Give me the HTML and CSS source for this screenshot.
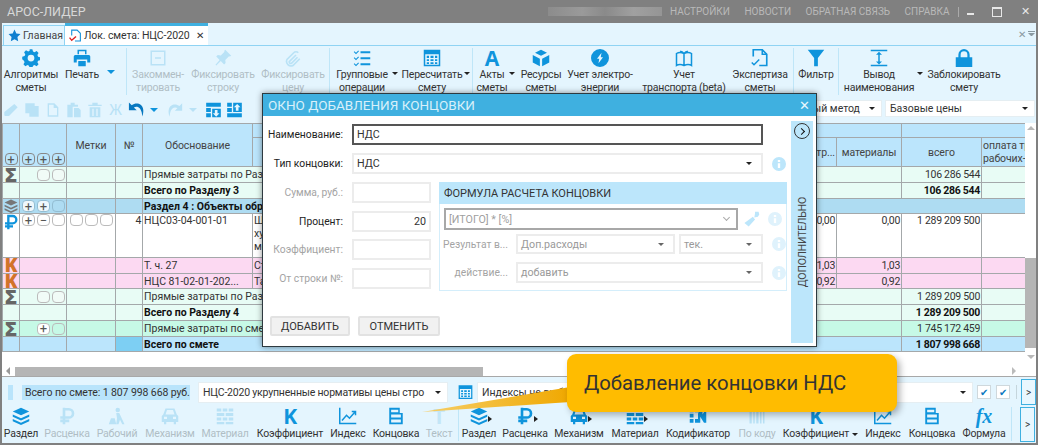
FILE: index.html
```html
<!DOCTYPE html>
<html lang="ru">

<head>
    <meta charset="UTF-8">
    <title>АРОС-ЛИДЕР</title>
    <link rel="stylesheet" href="styles.css">
</head>

<body>
    <svg class="defs" width="0" height="0">
        <symbol id="gear" viewBox="0 0 24 24"><path d="M10 1h4l1 3.4 2.2 1 3.2-1.7 2.8 2.8-1.7 3.2 1 2.3 3.5 1v4l-3.5 1-1 2.2 1.7 3.2-2.8 2.8-3.2-1.7-2.2 1-1 3.4h-4l-1-3.4-2.200-1-3.200 1.700-2.800-2.800 1.700-3.200-1-2.200L-1 16v-4l3.500-1 1-2.300-1.700-3.200L4.600 2.700l3.200 1.700 2.200-1zM12 9a5 5 0 1 0 0 10 5 5 0 0 0 0-10z" fill-rule="evenodd" transform="translate(1.200 1.200) scale(.9) translate(0 -2)"/></symbol>
        <symbol id="printer" viewBox="0 0 24 24"><path d="M6 1h12v6h-2V3H8v4H6zM3 8h18a2 2 0 0 1 2 2v8h-4v-4H5v4H1v-8a2 2 0 0 1 2-2zM7 16h10v7H7z"/></symbol>
        <symbol id="minusbox" viewBox="0 0 24 24"><path d="M2 2h20v20H2zM4 4v16h16V4zM8 11h8v2H8z" fill-rule="evenodd"/></symbol>
        <symbol id="pin" viewBox="0 0 24 24"><path d="M15 1l8 8-2 1-1-.5-5 5 .500 4-2 2-4.500-4.500L3 22l-1-1 5.500-6.500L3 10l2-2 4 .500 5-5-.500-1z"/></symbol>
        <symbol id="clip" viewBox="0 0 24 24"><path d="M19 5a4 4 0 0 0-6 0L4 14a6 6 0 0 0 8 8l9-9M16 8l-9 9a2 2 0 0 0 3 2l8-8" fill="none" stroke="currentColor" stroke-width="2.200"/></symbol>
        <symbol id="listcheck" viewBox="0 0 24 24"><path d="M10 3h13v2.500H10zM10 11h13v2.500H10zM10 19h13v2.500H10zM2 3l2 2 3-3 1 1-4 4-3-3zM2 11l2 2 3-3 1 1-4 4-3-3zM2 19l2 2 3-3 1 1-4 4-3-3z"/></symbol>
        <symbol id="calc" viewBox="0 0 24 24"><path d="M1 1h22v22H1zM3 7v14h18V7zM5 9h3v3H5zM10 9h4v3h-4zM16 9h3v3h-3zM5 13.500h3v2.500H5zM10 13.500h4v2.500h-4zM16 13.500h3v2.500h-3zM5 17.500h3V20H5zM10 17.500h4V20h-4zM16 17.500h3V20h-3z" fill-rule="evenodd"/></symbol>
        <symbol id="cubes" viewBox="0 0 24 24"><path d="M12 1l8 4-8 4-8-4zM1 8l9.500 5v10L1 18zM23 8l-9.500 5v10l9.500-5z"/></symbol>
        <symbol id="bolt" viewBox="0 0 24 24"><path d="M12 0a12 12 0 1 1 0 24 12 12 0 0 1 0-24zM14 5l-6 8h3l-1 6 6-8h-3z" fill-rule="evenodd"/></symbol>
        <symbol id="map" viewBox="0 0 24 24"><path d="M2 6c3-2 6-2 10 0 4-2 7-2 10 0v16c-3-2-6-2-10 0-4-2-7-2-10 0zM12 6v16M7 3c1.500 0 3.500 1 5 3 1.500-2 3.500-3 5-3" fill="none" stroke="currentColor" stroke-width="2"/></symbol>
        <symbol id="doccheck" viewBox="0 0 24 24"><path d="M3 10V1h12l6 6v15H11" fill="none" stroke="currentColor" stroke-width="2.200"/><path d="M15 1v6h6M1 18l3 3 7-7" fill="none" stroke="currentColor" stroke-width="2"/></symbol>
        <symbol id="funnel" viewBox="0 0 24 24"><path d="M1 1h22l-8.500 11v11h-5V12z"/></symbol>
        <symbol id="ibeam" viewBox="0 0 24 24"><path d="M1 1h22v2H1zM1 21h22v2H1zM11 6h2v12h-2zM12 3.500l4 4H8zM12 20.500l-4-4h8z"/></symbol>
        <symbol id="lock" viewBox="0 0 24 24"><path d="M12 0a7.500 7.500 0 0 1 7.500 7.500V11H23v13H1V11h3.500V7.500A7.500 7.500 0 0 1 12 0zm0 3a4.500 4.500 0 0 0-4.500 4.500V11h9V7.500A4.500 4.500 0 0 0 12 3z"/></symbol>
        <symbol id="pencil" viewBox="0 0 24 24"><path d="M17 3l5 5-13 13H3l-1-1v-5z"/></symbol>
        <symbol id="copy" viewBox="0 0 24 24"><path d="M2 2h14v4h6v16H8v-5H2z"/></symbol>
        <symbol id="doc" viewBox="0 0 24 24"><path d="M4 2h10l6 6v14H4zM6 4v16h12V9h-5V4z" fill-rule="evenodd"/></symbol>
        <symbol id="paste" viewBox="0 0 24 24"><path d="M2 4h5V1h6v3h5v3h-8v16H2zM12 9h7l3 3v11H12z"/></symbol>
        <symbol id="trash" viewBox="0 0 24 24"><path d="M2 4h6V1h8v3h6v2H2zM4 8h16v15H4zM8 10v11h2V10zM14 10v11h2V10z" fill-rule="evenodd"/></symbol>
        <symbol id="undo" viewBox="0 0 24 24"><path d="M2 2v11h11L9 9c4-2 9-1 11 7l1 6c3-9 1-16-5-18-4-1-7 0-10 2z"/></symbol>
        <symbol id="griddown" viewBox="0 0 24 24"><path d="M1 1h22v6H1zM1 9h7v6H1zM1 17h7v6H1zM10 10h13v13H10zM14 12v5h-3l5 5 5-5h-3v-5z" fill-rule="evenodd"/></symbol>
        <symbol id="gridup" viewBox="0 0 24 24"><path d="M1 1h7v6H1zM1 9h7v6H1zM1 17h22v6H1zM10 1h13v14H10zM16 3l-5 5h3v5h4V8h3z" fill-rule="evenodd"/></symbol>
        <symbol id="layers" viewBox="0 0 24 24"><path d="M12 1l11 5-11 5L1 6zM1 10l11 5 11-5v3l-11 5-11-5zM1 16l11 5 11-5v3l-11 5-11-5z"/></symbol>
        <symbol id="ruble" viewBox="0 0 24 24"><path d="M8 1v22M8 3h6.500a5.500 5.500 0 0 1 0 11H3M3 18.500h12" fill="none" stroke="currentColor" stroke-width="3.500"/></symbol>
        <symbol id="worker" viewBox="0 0 24 24"><path d="M13 1a3 3 0 1 1 0 6 3 3 0 0 1 0-6zM11 8h4l7 15h-3l-3-6-2 6h-3l1-8zM1 23l3-8h5l2 8z"/></symbol>
        <symbol id="car" viewBox="0 0 24 24"><path d="M6 2h12l3 8 2 2v8h-3v3h-3v-3H7v3H4v-3H1v-8l2-2zM8 4l-2 6h12l-2-6zM4 13v3h4v-3zM16 13v3h4v-3z" fill-rule="evenodd"/></symbol>
        <symbol id="bricks" viewBox="0 0 24 24"><path d="M1 2h6v4H1zM9 2h6v4H9zM17 2h6v4h-6zM1 8h10v4H1zM13 8h10v4H13zM1 14h6v4H1zM9 14h6v4H9zM17 14h6v4h-6zM1 20h10v3H1zM13 20h10v3H13z"/></symbol>
        <symbol id="chart" viewBox="0 0 24 24"><path d="M1 1v21h22" fill="none" stroke="currentColor" stroke-width="2"/><path d="M4 18l6-7 4 4 7-8M17 6h5v5" fill="none" stroke="currentColor" stroke-width="2"/></symbol>
        <symbol id="ending" viewBox="0 0 24 24"><path d="M3 1h14v7h4v15H3zM5.500 3.500V7H15V3.500zM5.500 10v4h13v-4zM5.500 16.500v4h13v-4z" fill-rule="evenodd"/></symbol>
        <symbol id="codes" viewBox="0 0 24 24"><path d="M1 2h5v5H1zM8 2h5v5H8zM1 9h5v5H1zM1 16h5v5H1zM8 16h5v5H8zM15 2h3v8l5-8h0v19h-3l-5-8v8h-3V9z"/></symbol>
        <symbol id="barcode" viewBox="0 0 24 24"><path d="M2 2h3v20H2zM7 2h2v20H7zM11 2h3v20h-3zM16 2h2v20h-2zM20 2h2v20h-2z"/></symbol>
        <symbol id="star" viewBox="0 0 24 24"><path d="M12 1l3.400 7.300 7.600 1-5.600 5.400 1.400 8L12 19l-6.800 3.700 1.400-8L1 9.300l7.600-1z"/></symbol>
        <symbol id="brush" viewBox="0 0 24 24"><path d="M17 1h5l1 4-2 3-5 1 1-6zM14 8l3 4-9 10-6-5z"/></symbol>
        <symbol id="info" viewBox="0 0 24 24"><path d="M12 0a12 12 0 1 1 0 24 12 12 0 0 1 0-24zM10 5v3.500h4V5zM10 10.500V19h4v-8.500z" fill-rule="evenodd"/></symbol>
    </svg>

    <div class="app">
        <header class="titlebar">
            <span class="app-name">АРОС-ЛИДЕР</span>
            <span class="user-blur"></span>
            <a class="top-link">НАСТРОЙКИ</a>
            <a class="top-link">НОВОСТИ</a>
            <a class="top-link">ОБРАТНАЯ СВЯЗЬ</a>
            <a class="top-link">СПРАВКА</a>
            <span class="top-sep"></span>
            <span class="win-btn win-min"></span>
            <span class="win-btn win-max"></span>
            <span class="win-btn win-close">✕</span>
        </header>

        <div class="tabbar">
            <div class="tab tab-home"><svg class="tab-ic"><use href="#star"/></svg>Главная</div>
            <div class="tab tab-active">
                <svg class="tab-ic tab-doc" viewBox="0 0 24 24"><path d="M5 12V2h10l6 6v14H11" fill="none" stroke="#1590d8" stroke-width="2"/><path d="M1 16l4 5 8-7" fill="none" stroke="#e02020" stroke-width="2.500"/></svg>
                Лок. смета: НЦС-2020<span class="tab-x">✕</span>
            </div>
            <div class="tab-tools">✕ <span class="tab-menu"></span></div>
        </div>

        <div class="ribbon">
            <div class="tool w58"><svg class="ic"><use href="#gear"/></svg><span>Алгоритмы<br>сметы</span></div>
            <div class="tool w44"><svg class="ic"><use href="#printer"/></svg><span>Печать</span></div>
            <span class="caret caret-blue w14"></span>
            <span class="sep sep-a"></span>
            <div class="tool w62 off"><svg class="ic"><use href="#minusbox"/></svg><span>Закоммен-<br>тировать</span></div>
            <div class="tool w68 off"><svg class="ic"><use href="#pin"/></svg><span>Фиксировать<br>строку</span></div>
            <div class="tool w72 off"><svg class="ic"><use href="#clip"/></svg><span>Фиксировать<br>цену</span></div>
            <span class="sep"></span>
            <div class="tool w64"><svg class="ic"><use href="#listcheck"/></svg><span>Групповые<br>операции</span></div>
            <span class="caret w5"></span>
            <div class="tool w68"><svg class="ic"><use href="#calc"/></svg><span>Пересчитать<br>смету</span></div>
            <span class="caret w6"></span>
            <span class="sep"></span>
            <div class="tool w38"><span class="glyph">A</span><span>Акты<br>сметы</span></div>
            <span class="caret w6"></span>
            <div class="tool w48"><svg class="ic"><use href="#cubes"/></svg><span>Ресурсы<br>сметы</span></div>
            <div class="tool w70"><svg class="ic"><use href="#bolt"/></svg><span>Учет электро-<br>энергии</span></div>
            <div class="tool w98"><svg class="ic"><use href="#map"/></svg><span>Учет<br>транспорта (beta)</span></div>
            <div class="tool w54"><svg class="ic"><use href="#doccheck"/></svg><span>Экспертиза<br>сметы</span></div>
            <span class="sep sep-b"></span>
            <div class="tool w44"><svg class="ic"><use href="#funnel"/></svg><span>Фильтр</span></div>
            <span class="sep"></span>
            <div class="tool w80"><svg class="ic"><use href="#ibeam"/></svg><span>Вывод<br>наименования</span></div>
            <span class="caret w5"></span>
            <div class="tool w82"><svg class="ic"><use href="#lock"/></svg><span>Заблокировать<br>смету</span></div>
        </div>

        <div class="editbar">
            <div class="edit-icons">
                <svg class="eic off"><use href="#pencil"/></svg>
                <svg class="eic off"><use href="#copy"/></svg>
                <svg class="eic off"><use href="#doc"/></svg>
                <svg class="eic off"><use href="#paste"/></svg>
                <svg class="eic off"><use href="#trash"/></svg>
                <span class="eic-text">Ж</span>
                <svg class="eic strong"><use href="#undo"/></svg>
                <span class="caret caret-blue"></span>
                <svg class="eic off flip"><use href="#undo"/></svg>
                <span class="caret caret-pale"></span>
                <svg class="eic grid-ic"><use href="#griddown"/></svg>
                <svg class="eic grid-ic"><use href="#gridup"/></svg>
            </div>
            <div class="combo combo-method"><span>Ресурсный метод</span><i class="caret"></i></div>
            <div class="combo combo-prices"><span>Базовые цены</span><i class="caret"></i></div>
        </div>

        <div class="grid-area">
            <div class="grid-main">
                <table class="grid">
                    <colgroup>
                        <col class="c1"><col class="c2"><col class="c3"><col class="c4"><col class="c5">
                        <col class="c6"><col class="c7"><col class="c8"><col class="c9"><col class="c10"><col class="c11">
                    </colgroup>
                    <tr class="head-top">
                        <th rowspan="2" class="head-btns"><div class="boxes center"><b class="box">+</b></div></th>
                        <th rowspan="2" class="head-btns"><div class="boxes"><b class="box">+</b><b class="box">+</b><b class="box">+</b></div></th>
                        <th rowspan="2">Метки</th>
                        <th rowspan="2">№</th>
                        <th rowspan="2">Обоснование</th>
                        <th colspan="4"></th>
                        <th colspan="2"></th>
                    </tr>
                    <tr class="head-sub">
                        <th>Наименование</th>
                        <th></th>
                        <th class="clip">мех. тр...</th>
                        <th>материалы</th>
                        <th>всего</th>
                        <th class="clip">оплата труда<br>рабочих-строителей</th>
                    </tr>
                    <tr class="r16 sum">
                        <td class="sym">Σ</td>
                        <td><div class="boxes"><b class="box"></b><b class="box"></b></div></td>
                        <td></td><td></td>
                        <td colspan="5" class="clip">Прямые затраты по Разделу 3</td>
                        <td class="num">106 286 544</td><td></td>
                    </tr>
                    <tr class="r16 sum">
                        <td></td><td></td><td></td><td></td>
                        <td colspan="5" class="strong">Всего по Разделу 3</td>
                        <td class="num strong">106 286 544</td><td></td>
                    </tr>
                    <tr class="r15 section">
                        <td class="sym-ic"><svg class="row-ic"><use href="#layers"/></svg></td>
                        <td><div class="boxes"><b class="box light">+</b><b class="box light">+</b><b class="box"></b></div></td>
                        <td></td><td></td>
                        <td colspan="7" class="strong">Раздел 4 : Объекты образования</td>
                    </tr>
                    <tr class="r44 plain">
                        <td class="sym-ic top"><svg class="row-ic rub"><use href="#ruble"/></svg></td>
                        <td class="top"><div class="boxes"><b class="box">+</b><b class="box">−</b><b class="box"></b></div></td>
                        <td class="top"><div class="boxes center"><b class="box"></b><b class="box"></b><b class="box"></b></div></td>
                        <td class="num top">4</td>
                        <td class="top">НЦС03-04-001-01</td>
                        <td class="top">Школы<br>художественные<br>местного значения</td>
                        <td></td>
                        <td class="num top">0,00</td>
                        <td class="num top">0,00</td>
                        <td class="num top">1 289 209 500</td>
                        <td></td>
                    </tr>
                    <tr class="r16 pink">
                        <td class="sym k">K</td><td></td><td></td><td></td>
                        <td>Т. ч. 27</td><td>Стоимость</td><td></td>
                        <td class="num">1,03</td><td class="num">1,03</td><td></td><td></td>
                    </tr>
                    <tr class="r15 pink">
                        <td class="sym k">K</td><td></td><td></td><td></td>
                        <td>НЦС 81-02-01-202...</td><td>Таблица</td><td></td>
                        <td class="num">0,92</td><td class="num">0,92</td><td></td><td></td>
                    </tr>
                    <tr class="r16 sum">
                        <td class="sym">Σ</td>
                        <td><div class="boxes"><b class="box"></b><b class="box"></b></div></td>
                        <td></td><td></td>
                        <td colspan="5" class="clip">Прямые затраты по Разделу 4</td>
                        <td class="num">1 289 209 500</td><td></td>
                    </tr>
                    <tr class="r16 sum">
                        <td></td><td></td><td></td><td></td>
                        <td colspan="5" class="strong">Всего по Разделу 4</td>
                        <td class="num strong">1 289 209 500</td><td></td>
                    </tr>
                    <tr class="r16 sum-all">
                        <td class="sym">Σ</td>
                        <td><div class="boxes"><b class="box">+</b><b class="box mint"></b></div></td>
                        <td></td><td></td>
                        <td colspan="5" class="clip">Прямые затраты по смете</td>
                        <td class="num">1 745 172 459</td><td></td>
                    </tr>
                    <tr class="r15 total">
                        <td></td><td></td><td></td><td class="num-cell"></td>
                        <td colspan="5" class="strong">Всего по смете</td>
                        <td class="num strong">1 807 998 668</td><td></td>
                    </tr>
                </table>
            </div>
            <div class="vscroll">
                <i class="arrow-up"></i>
                <i class="vthumb"></i>
                <i class="arrow-down"></i>
            </div>
        </div>

        <div class="hscroll">
            <i class="arrow-left"></i>
            <i class="hthumb"></i>
            <i class="arrow-right"></i>
        </div>

        <div class="status">
            <span class="marker"></span>
            <span class="sum-box">Всего по смете: 1 807 998 668 руб.</span>
            <div class="combo combo-base"><span>НЦС-2020 укрупненные нормативы цены стро</span><i class="caret"></i></div>
            <svg class="calc-ic"><use href="#calc"/></svg>
            <div class="combo combo-index"><span>Индексы не выбраны</span><i class="caret"></i></div>
            <span class="check">✔</span>
            <span class="check">✔</span>
            <span class="status-sep"></span>
            <span class="more-btn more-status">&gt;</span>
        </div>

        <div class="bottom">
            <div class="tool w38"><svg class="ic"><use href="#layers"/></svg><span>Раздел</span></div>
            <div class="tool w54 off"><svg class="ic"><use href="#ruble"/></svg><span>Расценка</span></div>
            <div class="tool w46 off"><svg class="ic"><use href="#worker"/></svg><span>Рабочий</span></div>
            <div class="tool w60 off"><svg class="ic"><use href="#car"/></svg><span>Механизм</span></div>
            <div class="tool w50 off"><svg class="ic"><use href="#bricks"/></svg><span>Материал</span></div>
            <div class="tool w80"><span class="glyph">K</span><span>Коэффициент</span></div>
            <div class="tool w36"><svg class="ic"><use href="#chart"/></svg><span>Индекс</span></div>
            <div class="tool w60"><svg class="ic"><use href="#ending"/></svg><span>Концовка</span></div>
            <div class="tool w26 off"><span class="glyph">T</span><span>Текст</span></div>
            <span class="sep sep-c"></span>
            <div class="tool w40"><svg class="ic ic-more"><use href="#layers"/><path d="M18 9l4 3-4 3z"/></svg><span>Раздел</span></div>
            <div class="tool w52"><svg class="ic ic-more"><use href="#ruble"/><path d="M18 9l4 3-4 3z"/></svg><span>Расценка</span></div>
            <div class="tool w56"><svg class="ic ic-more"><use href="#car"/><path d="M18 9l4 3-4 3z"/></svg><span>Механизм</span></div>
            <div class="tool w56"><svg class="ic ic-more"><use href="#bricks"/><path d="M18 9l4 3-4 3z"/></svg><span>Материал</span></div>
            <div class="tool w70"><svg class="ic ic-more"><use href="#codes"/></svg><span>Кодификатор</span></div>
            <div class="tool w48 off"><svg class="ic"><use href="#barcode"/></svg><span>По коду</span></div>
            <div class="tool w70"><span class="glyph">K</span><span>Коэффициент</span></div>
            <span class="caret w10"></span>
            <div class="tool w42"><svg class="ic ic-more"><use href="#chart"/></svg><span>Индекс</span></div>
            <div class="tool w56"><svg class="ic ic-more"><use href="#ending"/></svg><span>Концовка</span></div>
            <div class="tool w48"><span class="glyph fx">fx</span><span>Формула</span></div>
            <span class="sep sep-d"></span>
            <span class="more-btn more-bottom">&gt;</span>
        </div>

        <!-- окно добавления концовки -->
        <section class="modal">
            <div class="modal-title"><span>ОКНО ДОБАВЛЕНИЯ КОНЦОВКИ</span><span class="modal-x">✕</span></div>
            <div class="modal-body">
                <div class="form">
                    <div class="field">
                        <label class="strong-label">Наименование:</label>
                        <div class="input input-focus">НДС</div>
                    </div>
                    <div class="field">
                        <label class="strong-label">Тип концовки:</label>
                        <div class="input input-wide"><span>НДС</span><i class="caret"></i></div>
                        <svg class="info"><use href="#info"/></svg>
                    </div>
                    <div class="lower">
                        <div class="short-fields">
                            <div class="field"><label>Сумма, руб.:</label><div class="input short"></div></div>
                            <div class="field"><label class="strong-label">Процент:</label><div class="input short right">20</div></div>
                            <div class="field"><label>Коэффициент:</label><div class="input short"></div></div>
                            <div class="field"><label>От строки №:</label><div class="input short"></div></div>
                        </div>
                        <div class="formula">
                            <div class="formula-head">ФОРМУЛА РАСЧЕТА КОНЦОВКИ</div>
                            <div class="formula-row row-top">
                                <div class="input formula-input"><span>[ИТОГО] * [%]</span><i class="chev"></i></div>
                                <svg class="brush"><use href="#brush"/></svg>
                                <svg class="info info-pale"><use href="#info"/></svg>
                            </div>
                            <div class="formula-row row-mid">
                                <label>Результат в...</label>
                                <div class="input pale result-combo"><span>Доп.расходы</span><i class="caret caret-gray"></i></div>
                                <div class="input pale period-combo"><span>тек.</span><i class="caret caret-gray"></i></div>
                                <svg class="info info-pale"><use href="#info"/></svg>
                            </div>
                            <div class="formula-row row-low">
                                <label>действие...</label>
                                <div class="input pale action-combo"><span>добавить</span><i class="caret caret-gray"></i></div>
                                <svg class="info info-pale"><use href="#info"/></svg>
                            </div>
                        </div>
                    </div>
                    <div class="buttons">
                        <button class="btn btn-add">ДОБАВИТЬ</button>
                        <button class="btn btn-cancel">ОТМЕНИТЬ</button>
                    </div>
                </div>
                <aside class="strip">
                    <span class="strip-btn"><i></i></span>
                    <span class="strip-text">ДОПОЛНИТЕЛЬНО</span>
                </aside>
            </div>
        </section>

        <!-- подсказка поверх окна -->
        <svg class="callout-tail" width="150" height="50" viewBox="0 0 150 50">
            <defs>
                <linearGradient id="tail" x1="0" x2="1" y1="0" y2="0">
                    <stop offset="0" stop-color="#f6cf6a"/>
                    <stop offset="1" stop-color="#f0a800"/>
                </linearGradient>
            </defs>
            <path d="M0 49L148 24v15z" fill="url(#tail)"/>
        </svg>
        <div class="callout">Добавление концовки НДС</div>
    </div>
</body>

</html>
```

FILE: styles.css
```css
* {
    box-sizing: border-box;
}

html,
body {
    margin: 0;
    height: 100%;
    overflow: hidden;
}

body {
    font-family: Roboto, "Noto Sans", sans-serif;
    font-size: 10.500px;
    color: #333;
    background: #808080;
}

.defs {
    position: absolute;
}

.app {
    position: relative;
    width: 1038px;
    height: 445px;
    display: flex;
    flex-direction: column;
    padding: 0 2px 2px;
    background: #808080;
    overflow: hidden;
}

/* заголовок окна */
.titlebar {
    height: 23px;
    flex: none;
    display: flex;
    align-items: center;
    color: #b9b9b9;
}

.app-name {
    flex: none;
    width: 541px;
    margin-left: 5px;
    font-size: 12.500px;
    color: #d8d8d8;
}

.user-blur {
    flex: none;
    width: 114px;
    height: 9px;
    margin-right: 8px;
    background: linear-gradient(90deg, #8c8c8c, #9a9a9a 30%, #8a8a8a 50%, #a0a0a0 75%, #959595);
}

.top-link {
    flex: none;
    font-size: 10px;
    margin-right: 14.500px;
    white-space: nowrap;
}

.top-sep {
    flex: none;
    width: 1px;
    height: 10px;
    background: #aaa;
    margin: 0 0 0 -6px;
}

.win-btn {
    flex: none;
    color: #e8e8e8;
    display: flex;
    justify-content: center;
    align-items: center;
    font-size: 11px;
}

.win-min {
    width: 22px;
}

.win-max {
    width: 32px;
}

.win-close {
    width: 24px;
}

.win-min::before {
    content: "";
    width: 7px;
    height: 2px;
    margin-top: 5px;
    background: #e8e8e8;
}

.win-max::before {
    content: "";
    width: 8px;
    height: 7px;
    border: 1px solid #e8e8e8;
    border-top-width: 2px;
}

/* вкладки */
.tabbar {
    height: 23px;
    flex: none;
    display: flex;
    align-items: flex-end;
    padding-left: 1px;
    background: #e4f5fe;
    border-bottom: 1px solid #8fd3f3;
}

.tab {
    height: 20px;
    display: flex;
    align-items: center;
    font-size: 10.500px;
    white-space: nowrap;
}

.tab-home {
    width: 62px;
    border: 1px solid #8fd3f3;
    border-bottom: 0;
    padding-left: 4px;
    color: #444;
}

.tab-active {
    width: 143px;
    height: 22px;
    background: #fff;
    border-top: 3px solid #3fb0e0;
    padding-left: 4px;
    color: #333;
    letter-spacing: -.1px;
}

.tab-ic {
    width: 13px;
    height: 13px;
    fill: #0f7fd0;
    margin-right: 2px;
    flex: none;
}

.tab-doc {
    margin-right: 2px;
}

.tab-x {
    margin-left: 6px;
    font-size: 10px;
}

.tab-tools {
    margin-left: auto;
    align-self: center;
    display: flex;
    align-items: center;
    gap: 2px;
    color: #8a9aa2;
    font-size: 10px;
    padding-right: 1px;
}

.tab-menu {
    width: 7px;
    height: 6px;
    border-top: 1px solid #8a9aa2;
}

.tab-menu::after {
    content: "";
    display: block;
    margin-top: 1px;
    border: 3.500px solid transparent;
    border-top-color: #8a9aa2;
    border-bottom: 0;
}

/* лента */
.ribbon {
    height: 50px;
    flex: none;
    display: flex;
    align-items: flex-start;
    background: #e4f5fe;
    overflow: hidden;
}

.tool {
    flex: none;
    display: flex;
    flex-direction: column;
    align-items: center;
    text-align: center;
    line-height: 13px;
    letter-spacing: -.2px;
    color: #333;
    white-space: nowrap;
}

.tool span {
    display: block;
}

.tool.off {
    color: #b0bec5;
}

.ribbon .tool {
    padding-top: 3px;
}

.ribbon .tool > span:last-child {
    margin-top: 1px;
}

.ic {
    flex: none;
    width: 18px;
    height: 18px;
    fill: #0f94dc;
    color: #0f94dc;
    overflow: visible;
}

.off .ic {
    fill: #b9e2f6;
    color: #b9e2f6;
}

.ic-more path {
    fill: #222;
}

.tool .glyph {
    height: 18px;
    font-family: "Open Sans", sans-serif;
    font-weight: 700;
    font-size: 21px;
    line-height: 18px;
    color: #0f94dc;
}

.off .glyph {
    color: #c3e6f7;
}

.tool .fx {
    font-family: "Liberation Serif", serif;
    font-style: italic;
    font-size: 20px;
}

.w14 { width: 14px; }
.w5 { width: 5px; }
.w6 { width: 6px; }
.w10 { width: 10px; }
.w26 { width: 26px; }
.w36 { width: 36px; }
.w38 { width: 38px; }
.w40 { width: 40px; }
.w42 { width: 42px; }
.w44 { width: 44px; }
.w46 { width: 46px; }
.w48 { width: 48px; }
.w50 { width: 50px; }
.w52 { width: 52px; }
.w54 { width: 54px; }
.w56 { width: 56px; }
.w58 { width: 58px; }
.w60 { width: 60px; }
.w62 { width: 62px; }
.w64 { width: 64px; }
.w68 { width: 68px; }
.w70 { width: 70px; }
.w72 { width: 72px; }
.w80 { width: 80px; }
.w82 { width: 82px; }
.w98 { width: 98px; }

.sep {
    flex: none;
    width: 1px;
    height: 47px;
    margin-top: 2px;
    background: #bfe6f8;
}

.sep-a {
    margin-left: 4px;
}

.sep-b {
    margin: 2px 0 0 6px;
}

.caret {
    flex: none;
    display: block;
    width: 0;
    height: 0;
    border: 3px solid transparent;
    border-top: 3px solid #222;
    border-bottom: 0;
    margin-top: 25px;
}

.caret-blue {
    border-width: 4px 4px 0;
    border-top-color: #0f94dc;
}

.ribbon .w14 {
    width: 0;
    margin: 24px 7px 0 3px;
}

.ribbon .w5,
.ribbon .w6 {
    width: 0;
    margin-right: 0;
    margin-top: 26px;
    margin-left: -2px;
}

.ribbon .w6 {
    margin-right: 2px;
}

/* панель правки */
.editbar {
    height: 27px;
    flex: none;
    display: flex;
    align-items: flex-start;
    background: #e4f5fe;
    padding: 5px 0 0 1px;
}

.edit-icons {
    flex: none;
    display: flex;
    align-items: center;
    width: 300px;
    height: 17px;
}

.eic {
    width: 16px;
    height: 16px;
    margin-right: 5px;
    fill: #0f94dc;
    flex: none;
}

.eic.off {
    fill: #b9e2f6;
}

.eic.strong {
    width: 18px;
    height: 17px;
    margin-right: 5px;
    fill: #0878c0;
}

.eic.flip {
    transform: scaleX(-1);
    width: 17px;
    margin-right: 5px;
}

.eic.grid-ic {
    width: 17px;
    margin-right: 4px;
}

.eic-text {
    width: 13px;
    margin: 0 5px 0 1px;
    font-size: 14px;
    color: #b9e2f6;
    text-align: center;
}

.edit-icons .caret {
    margin: 0 9px 0 0;
}

.edit-icons .caret-pale {
    border-width: 4px 4px 0;
    border-top-color: #b9e2f6;
    margin-right: 8px;
}

.combo {
    flex: none;
    display: flex;
    align-items: center;
    justify-content: space-between;
    height: 17px;
    padding: 0 6px 0 4px;
    background: #fff;
    border: 1px solid #e5eef2;
    white-space: nowrap;
    overflow: hidden;
}

.combo .caret {
    margin: 0;
}

.combo-method {
    width: 120px;
    margin-left: 459px;
    margin-top: -1px;
    padding-left: 10px;
}

.combo-prices {
    width: 150px;
    margin-left: 3px;
    margin-top: -1px;
}

/* таблица */
.grid-area {
    height: 243px;
    flex: none;
    display: flex;
    background: #fff;
}

.grid-main {
    width: 1023px;
    flex: none;
    overflow: hidden;
}

.grid {
    width: 1023px;
    table-layout: fixed;
    border-collapse: collapse;
    line-height: 13px;
    color: #333;
}

.c1 { width: 17px; }
.c2 { width: 47px; }
.c3 { width: 49px; }
.c4 { width: 27px; }
.c5 { width: 110px; }
.c6 { width: 388px; }
.c7 { width: 140px; }
.c8 { width: 56px; }
.c9 { width: 65px; }
.c10 { width: 80px; }
.c11 { width: 44px; }

.grid th,
.grid td {
    border: 1px solid #a4a8aa;
    padding: 0 1px;
    overflow: hidden;
    white-space: nowrap;
}

.grid th {
    background: #bbe5fc;
    font-weight: 400;
    text-align: center;
    letter-spacing: -.1px;
    color: #444;
}

.head-top {
    height: 14px;
}

.head-sub {
    height: 29px;
}

.grid .head-btns {
    vertical-align: bottom;
    padding-bottom: 1px;
}

.clip {
    text-overflow: clip;
    overflow: hidden;
}

.grid th.clip:nth-child(3) {
    text-align: right;
}

.grid th.clip:last-child {
    text-align: left;
}

.r16 { height: 16px; }
.r15 { height: 15px; }
.r44 { height: 44px; }

.sum td { background: #e8fcf5; }
.section td { background: #aedcf2; }
.plain td { background: #fff; }
.pink td { background: #fcd9f2; }
.sum-all td { background: #c6f9e6; }
.total td { background: #bbe5fc; }
.total .num-cell { background: #7dcff3; }

.grid .num {
    text-align: right;
    letter-spacing: -.3px;
}

.grid .strong {
    font-weight: 700;
    color: #111;
}

.grid .top {
    vertical-align: top;
}

.grid .sym {
    padding: 0;
    font-family: "Open Sans", sans-serif;
    font-weight: 800;
    font-size: 20px;
    line-height: 13px;
    text-align: center;
    color: #666;
}

.grid .k {
    font-size: 19px;
    color: #d2732a;
}

.grid .sym-ic {
    text-align: center;
    padding: 0;
}

.row-ic {
    display: block;
    width: 14px;
    height: 14px;
    margin: 0 auto;
    fill: #777;
}

.rub {
    color: #0f94dc;
    width: 16px;
    height: 16px;
    fill: none;
}

.boxes {
    display: flex;
    justify-content: flex-end;
    gap: 2px;
    padding-right: 0;
}

.boxes.center {
    justify-content: center;
}

.box {
    width: 13px;
    height: 12px;
    display: flex;
    align-items: center;
    justify-content: center;
    font-weight: 400;
    font-size: 13px;
    line-height: 1;
    color: #555;
    background: #fff;
    border: 1px solid #bbb;
    border-radius: 4px;
}

.grid th .box {
    background: #bbe5fc;
    border-color: #888;
}

.sum .box {
    background: #f1fbf7;
}

.section .box {
    background: #aedcf2;
    border-color: #93bdd2;
}

.section .box.light {
    background: #eef8fc;
}

.sum-all .box.mint {
    background: #c6f9e6;
}

/* полосы прокрутки */
.vscroll {
    flex: 1;
    display: flex;
    flex-direction: column;
    align-items: center;
    padding-top: 3px;
    background: #fff;
}

.arrow-up,
.arrow-down {
    width: 0;
    height: 0;
    border: 4px solid transparent;
}

.arrow-up {
    border-bottom: 4px solid #b8b8b8;
    border-top: 0;
}

.arrow-down {
    border-top: 4px solid #b8b8b8;
    border-bottom: 0;
    margin-top: 7px;
}

.vthumb {
    width: 100%;
    height: 90px;
    margin-top: 128px;
    background: #b5b5b5;
}

.hscroll {
    height: 11px;
    flex: none;
    display: flex;
    align-items: center;
    background: #fff;
    padding-left: 4px;
    border-bottom: 1px solid #a8a8a8;
}

.arrow-left,
.arrow-right {
    width: 0;
    height: 0;
    border: 4px solid transparent;
}

.arrow-left {
    border-right: 4px solid #999;
    border-left: 0;
}

.arrow-right {
    border-left: 4px solid #bbb;
    border-right: 0;
    margin-left: 529px;
}

.hthumb {
    width: 468px;
    height: 9px;
    margin-left: 5px;
    background: #b5b5b5;
}

/* нижняя панель */
.status {
    height: 30px;
    flex: none;
    display: flex;
    align-items: center;
    background: #e4f5fe;
}

.marker {
    flex: none;
    width: 5px;
    height: 15px;
    margin-left: 6px;
    background: #b9e4fb;
}

.sum-box {
    flex: none;
    width: 168px;
    height: 15px;
    line-height: 15px;
    margin-left: 9px;
    padding-left: 3px;
    background: #b9e4fb;
    letter-spacing: -.1px;
    white-space: nowrap;
    overflow: hidden;
}

.combo-base {
    width: 250px;
    height: 21px;
    margin-left: 8px;
    letter-spacing: -.2px;
}

.calc-ic {
    width: 15px;
    height: 16px;
    margin-left: 10px;
    fill: #0f94dc;
    flex: none;
}

.combo-index {
    width: 496px;
    height: 21px;
    margin-left: 4px;
}

.check {
    flex: none;
    width: 14px;
    height: 14px;
    margin-left: 4px;
    display: flex;
    align-items: center;
    justify-content: center;
    font-size: 10px;
    color: #0a78c0;
    background: #fff;
    border: 1px solid #cfd8dc;
}

.check + .check {
    margin-left: 5px;
}

.status-sep {
    flex: none;
    width: 1px;
    height: 14px;
    margin-left: 6px;
    background: #c5d5dc;
}

.more-btn {
    flex: none;
    width: 15px;
    display: flex;
    align-items: center;
    justify-content: center;
    font-size: 10px;
    border: 1px solid #3fb0e0;
    background: #e9f7fe;
}

.more-status {
    height: 26px;
    margin-left: 4px;
}

.bottom {
    flex: 1;
    display: flex;
    align-items: flex-start;
    background: #e4f5fe;
}

.bottom .tool {
    line-height: 13px;
}

.bottom .tool > span:last-child {
    margin-top: 2px;
}

.bottom .sep {
    height: 34px;
    margin-top: 0;
}

.sep-c {
    margin-left: 6px;
}

.bottom .caret {
    margin-top: 26px;
    width: 0;
    margin-right: 4px;
    margin-left: 1px;
}

.sep-d {
    margin-left: 3px;
}

.more-bottom {
    height: 35px;
    margin-left: 8px;
}

/* модальное окно */
.modal {
    position: absolute;
    left: 262px;
    top: 93px;
    width: 555px;
    height: 254px;
    display: flex;
    flex-direction: column;
    background: #fff;
    border: 1px solid #2e3a40;
    box-shadow: 0 0 6px rgba(0, 0, 0, .45);
}

.modal-title {
    height: 22px;
    flex: none;
    display: flex;
    align-items: center;
    justify-content: space-between;
    padding: 0 6px 0 5px;
    background: #3fb0e0;
    color: #d8f0fa;
    font-size: 13.500px;
}

.modal-x {
    font-size: 13px;
    color: #e8f7fd;
}

.modal-body {
    flex: 1;
    display: flex;
    justify-content: space-between;
}

.form {
    padding-top: 8px;
}

.field {
    display: flex;
    align-items: center;
    margin-bottom: 8px;
}

.field label {
    width: 80px;
    flex: none;
    text-align: right;
    white-space: nowrap;
    color: #a4a4a4;
    margin-right: 9px;
    font-size: 10.300px;
}

.field .strong-label {
    color: #222;
}

.input {
    height: 21px;
    display: flex;
    align-items: center;
    padding: 0 3px;
    font-size: 10.700px;
    color: #333;
    background: #fff;
    border: 2px solid #ececec;
    white-space: nowrap;
}

.input-focus {
    width: 411px;
    border-color: #555;
}

.input-wide {
    width: 411px;
    justify-content: space-between;
}

.input .caret {
    margin: 0 6px 0 0;
}

.input .caret-gray {
    border-top-color: #666;
}

.short {
    width: 79px;
}

.right {
    justify-content: flex-end;
}

.info {
    width: 14px;
    height: 14px;
    margin-left: 9px;
    fill: #bce6fb;
    flex: none;
}

.info-pale {
    fill: #dff2fc;
}

.lower {
    display: flex;
    align-items: flex-start;
}

.short-fields .field {
    margin-bottom: 7.500px;
}

.formula {
    width: 348px;
    height: 109px;
    margin-left: 8px;
    border: 1px solid #d4eefb;
}

.formula-head {
    height: 22px;
    display: flex;
    align-items: center;
    padding-left: 5px;
    font-size: 11px;
    background: #bce6fb;
    margin: -1px -1px 0;
}

.formula-row {
    display: flex;
    align-items: center;
}

.formula-row label {
    width: 68px;
    margin-right: 8px;
    text-align: right;
    white-space: nowrap;
    color: #a4a4a4;
    font-size: 10.300px;
}

.row-top {
    margin: 4px 0 0 4px;
}

.row-mid {
    margin-top: 4px;
    height: 20px;
}

.row-low {
    margin-top: 8px;
}

.formula-input {
    width: 294px;
    height: 22px;
    justify-content: space-between;
    border-color: #a8a8a8;
    color: #a0a0a0;
}

.chev {
    width: 5px;
    height: 5px;
    margin: -3px 4px 0 0;
    border-right: 1px solid #aaa;
    border-bottom: 1px solid #aaa;
    transform: rotate(45deg);
}

.brush {
    width: 17px;
    height: 17px;
    margin-left: 5px;
    fill: #bce6fb;
    flex: none;
}

.row-top .info {
    margin-left: 8px;
}

.input.pale {
    justify-content: space-between;
    color: #9a9a9a;
}

.result-combo {
    width: 159px;
    height: 20px;
}

.period-combo {
    width: 84px;
    height: 20px;
    margin-left: 4px;
}

.action-combo {
    width: 247px;
}

.buttons {
    display: flex;
    gap: 8px;
    margin: 20px 0 0 7px;
}

.btn {
    height: 20px;
    padding: 0;
    font-family: inherit;
    font-size: 11px;
    color: #333;
    background: #f1f1f1;
    border: 2px solid #e2e2e2;
    border-radius: 2px;
}

.btn-add {
    width: 80px;
}

.btn-cancel {
    width: 82px;
}

.strip {
    width: 22px;
    margin: 5px 3px 3px 0;
    display: flex;
    flex-direction: column;
    align-items: center;
    background: #bce6fb;
}

.strip-btn {
    width: 16px;
    height: 16px;
    margin-top: 2px;
    display: flex;
    align-items: center;
    justify-content: center;
    border: 1.500px solid #333;
    border-radius: 50%;
}

.strip-btn i {
    width: 5px;
    height: 5px;
    margin-left: -2px;
    border-top: 1.500px solid #111;
    border-right: 1.500px solid #111;
    transform: rotate(45deg);
}

.strip-text {
    margin-top: 58px;
    writing-mode: vertical-rl;
    transform: rotate(180deg);
    font-size: 10.500px;
    letter-spacing: -.2px;
    color: #444;
    white-space: nowrap;
}

/* подсказка */
.callout {
    position: absolute;
    left: 567px;
    top: 354px;
    width: 330px;
    height: 58px;
    padding: 15px 0 0 17px;
    background: #ffbc00;
    border-radius: 9px;
    box-shadow: 3px 3px 7px rgba(0, 0, 0, .3);
    font-family: Roboto, sans-serif;
    font-size: 20.300px;
    line-height: 28px;
    color: #333;
    white-space: nowrap;
}

.callout-tail {
    position: absolute;
    left: 422px;
    top: 363px;
}
```
